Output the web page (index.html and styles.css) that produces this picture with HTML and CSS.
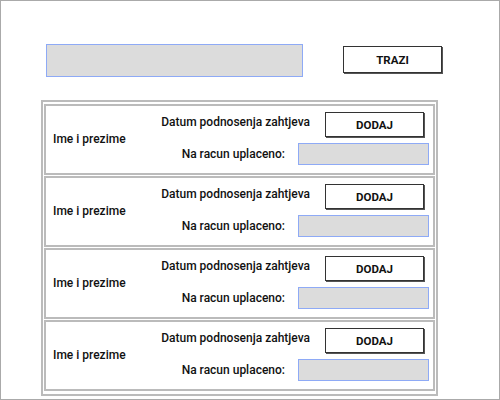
FILE: index.html
```html
<!DOCTYPE html>
<html>
<head>
<meta charset="utf-8">
<link rel="stylesheet" href="styles.css">
</head>
<body>
<div class="page">
  <div class="search">
    <div class="search-input"></div>
    <div class="btn btn-search">TRAZI</div>
  </div>
  <div class="list">
    <div class="row">
      <div class="name">Ime i prezime</div>
      <div class="fields">
        <div class="line">
          <div class="label label-date">Datum podnosenja zahtjeva</div>
          <div class="btn btn-add">DODAJ</div>
        </div>
        <div class="line line-paid">
          <div class="label label-paid">Na racun uplaceno:</div>
          <div class="field-input"></div>
        </div>
      </div>
    </div>
    <div class="row">
      <div class="name">Ime i prezime</div>
      <div class="fields">
        <div class="line">
          <div class="label label-date">Datum podnosenja zahtjeva</div>
          <div class="btn btn-add">DODAJ</div>
        </div>
        <div class="line line-paid">
          <div class="label label-paid">Na racun uplaceno:</div>
          <div class="field-input"></div>
        </div>
      </div>
    </div>
    <div class="row">
      <div class="name">Ime i prezime</div>
      <div class="fields">
        <div class="line">
          <div class="label label-date">Datum podnosenja zahtjeva</div>
          <div class="btn btn-add">DODAJ</div>
        </div>
        <div class="line line-paid">
          <div class="label label-paid">Na racun uplaceno:</div>
          <div class="field-input"></div>
        </div>
      </div>
    </div>
    <div class="row">
      <div class="name">Ime i prezime</div>
      <div class="fields">
        <div class="line">
          <div class="label label-date">Datum podnosenja zahtjeva</div>
          <div class="btn btn-add">DODAJ</div>
        </div>
        <div class="line line-paid">
          <div class="label label-paid">Na racun uplaceno:</div>
          <div class="field-input"></div>
        </div>
      </div>
    </div>
  </div>
</div>
</body>
</html>
```
FILE: styles.css
```css
html, body {
  margin: 0;
  padding: 0;
  background: #fff;
}
body {
  font-family: Roboto, "Liberation Sans", sans-serif;
  font-size: 12px;
  font-weight: 500;
  color: #111;
}
.page {
  width: 500px;
  height: 400px;
  box-sizing: border-box;
  border: 1px solid #aaa;
}
.search {
  display: flex;
  align-items: flex-start;
  padding: 43px 0 0 45px;
}
.search-input {
  width: 257px;
  height: 33px;
  box-sizing: border-box;
  background: #dcdcdc;
  border: 1px solid #8eaaf6;
}
.btn {
  box-sizing: border-box;
  border: 1px solid #333;
  box-shadow: 1px 1px 0 #555;
  background: #fff;
  font-size: 11.5px;
  font-weight: 700;
  color: #111;
  display: flex;
  align-items: center;
  justify-content: center;
}
.btn-search {
  width: 99px;
  height: 27px;
  margin: 2px 0 0 40px;
}
.list {
  margin: 23px 0 0 40px;
  width: 397px;
  box-sizing: border-box;
  border: 2px solid #bbb;
  padding: 2px 1px 3px 1px;
  display: flex;
  flex-direction: column;
  gap: 1px;
}
.row {
  height: 71px;
  box-sizing: border-box;
  border: 2px solid #bbb;
  display: flex;
}
.name {
  width: 104px;
  box-sizing: border-box;
  padding: 0 0 2px 7px;
  display: flex;
  align-items: center;
  line-height: 14px;
}
.fields {
  display: flex;
  flex-direction: column;
  padding-top: 6px;
}
.line {
  display: flex;
  align-items: flex-start;
}
.label {
  box-sizing: border-box;
  text-align: right;
  line-height: 14px;
  white-space: nowrap;
}
.label-date {
  width: 175px;
  padding-right: 15px;
  margin-top: 3px;
}
.btn-add {
  width: 99px;
  height: 25px;
}
.line-paid {
  margin-top: 6px;
}
.label-paid {
  width: 148px;
  padding-right: 13px;
  margin-top: 4px;
}
.field-input {
  width: 131px;
  height: 22px;
  box-sizing: border-box;
  background: #dcdcdc;
  border: 1px solid #8eaaf6;
}
```
